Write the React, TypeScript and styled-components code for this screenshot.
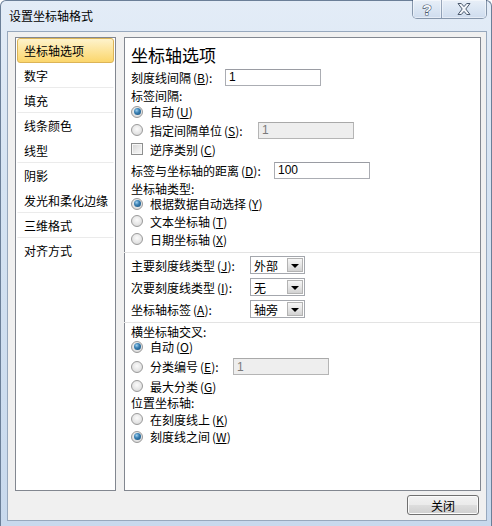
import React from "react";
import styled, { createGlobalStyle } from "styled-components";

const Global = createGlobalStyle`
  html, body { margin: 0; padding: 0; background: #ffffff; }
  body {
    font-family: "Noto Sans CJK SC", "Noto Sans", sans-serif;
    font-size: 12px;
    color: #000;
  }
  * { box-sizing: border-box; }
`;

const Window = styled.div`
  width: 492px;
  height: 526px;
  display: flex;
  flex-direction: column;
  background: linear-gradient(180deg, #e3ecf7 0%, #d5e3f2 35%, #c8d9ed 100%);
  border: 1px solid #6b7f98;
  border-bottom: none;
  border-radius: 6px 6px 0 0;
  padding: 0 4px 5px 6px;
`;

const TitleBar = styled.div`
  height: 30px;
  flex: none;
  display: flex;
  align-items: flex-start;
  justify-content: space-between;
`;

const TitleText = styled.div`
  margin-left: 2px;
  line-height: 30px;
  font-size: 12px;
  color: #000;
`;

const Caption = styled.div`
  display: flex;
  height: 19px;
  margin-top: -1px;
  border: 1px solid rgba(60, 82, 112, 0.55);
  border-top: none;
  border-radius: 0 0 5px 5px;
  overflow: hidden;
`;

const CapButton = styled.div<{ $w: number }>`
  width: ${(p) => p.$w}px;
  display: flex;
  align-items: center;
  justify-content: center;
  background: linear-gradient(180deg, #e8eff8 0%, #dbe6f3 50%, #cfdcee 100%);
  box-shadow: inset 0 0 0 1px rgba(255, 255, 255, 0.45);
  & + & {
    border-left: 1px solid rgba(60, 82, 112, 0.45);
  }
`;

const HelpGlyph = styled.span`
  font-family: "Liberation Sans", sans-serif;
  font-weight: bold;
  font-size: 15px;
  line-height: 15px;
  color: #f4f7fb;
  -webkit-text-stroke: 1.2px #4b5a6e;
  paint-order: stroke fill;
`;

const Client = styled.div`
  flex: 1;
  display: flex;
  flex-direction: column;
  background: #f0f0f0;
  border: 1px solid #97a8bd;
  padding: 5px 5px 5px 7px;
`;

const Body = styled.div`
  display: flex;
  gap: 8px;
  height: 454px;
`;

const NavList = styled.div`
  width: 101px;
  flex: none;
  background: #fff;
  border: 1px solid #828790;
  padding: 0 1px;
  display: flex;
  flex-direction: column;
`;

const NavItem = styled.div<{ $active?: boolean; $sep?: boolean }>`
  height: 25px;
  flex: none;
  display: flex;
  align-items: center;
  padding-left: 6px;
  font-size: 12px;
  color: #000;
  border: 1px solid ${(p) => (p.$active ? "#dcb457" : "transparent")};
  border-bottom-color: ${(p) =>
    p.$active ? "#dcb457" : p.$sep ? "#ebebeb" : "transparent"};
  border-radius: ${(p) => (p.$active ? "3px" : "0")};
  background: ${(p) =>
    p.$active
      ? "linear-gradient(180deg, #fef3cc 0%, #fde6a0 45%, #fbd66c 100%)"
      : "transparent"};
`;

const Panel = styled.div`
  flex: 1;
  background: #fff;
  border: 1px solid #828790;
  padding: 4px 6px;
  display: flex;
  flex-direction: column;
`;

const PanelTitle = styled.div`
  height: 24px;
  display: flex;
  align-items: center;
  font-size: 17px;
  color: #000;
`;

const Row = styled.div<{ $h: number }>`
  height: ${(p) => p.$h}px;
  flex: none;
  display: flex;
  align-items: center;
  white-space: nowrap;
`;

const Label = styled.span<{ $w?: number }>`
  display: inline-block;
  width: ${(p) => (p.$w ? `${p.$w}px` : "auto")};
  flex: none;
`;

const Opt = styled.span<{ $w?: number }>`
  display: inline-block;
  margin-left: 7px;
  width: ${(p) => (p.$w ? `${p.$w}px` : "auto")};
  flex: none;
`;

const Mn = styled.span`
  margin-left: 2px;
  u { text-underline-offset: 1px; }
`;

const TextBox = styled.div<{ $disabled?: boolean }>`
  width: 96px;
  height: 17px;
  flex: none;
  border: 1px solid ${(p) => (p.$disabled ? "#b5b5b5" : "#abadb3")};
  border-top-color: ${(p) => (p.$disabled ? "#a9a9a9" : "#9a9ca3")};
  background: ${(p) => (p.$disabled ? "#eeeeee" : "#fff")};
  color: ${(p) => (p.$disabled ? "#7a7a7a" : "#000")};
  padding-left: 3px;
  display: flex;
  align-items: center;
  font-family: "Liberation Sans", "Noto Sans CJK SC", sans-serif;
  font-size: 12px;
`;

const Radio = styled.span<{ $on?: boolean }>`
  width: 12px;
  height: 12px;
  flex: none;
  border-radius: 50%;
  border: 1px solid #9a9a9a;
  background: radial-gradient(circle at 50% 40%, #fbfbfb 0%, #e6e6e6 55%, #cfcfcf 100%);
  display: flex;
  align-items: center;
  justify-content: center;
  &::after {
    content: "";
    display: ${(p) => (p.$on ? "block" : "none")};
    width: 7px;
    height: 7px;
    border-radius: 50%;
    background: radial-gradient(circle at 38% 35%, #9fd0ef 0%, #3a80b3 40%, #104a76 100%);
  }
`;

const Check = styled.span`
  width: 12px;
  height: 12px;
  flex: none;
  border: 1px solid #8e8f8f;
  background: linear-gradient(135deg, #d3d3d3 0%, #ececec 60%, #f7f7f7 100%);
  box-shadow: inset 0 0 0 1px #f6f6f6;
`;

const Rule = styled.div<{ $top: number; $bottom: number }>`
  height: 1px;
  flex: none;
  background: #e3e3e3;
  margin: ${(p) => p.$top}px -6px ${(p) => p.$bottom}px -7px;
`;

const SelectGrid = styled.div`
  display: grid;
  grid-template-columns: 119px 55px;
  grid-auto-rows: 22px;
  align-items: center;
`;

const Select = styled.div`
  width: 55px;
  height: 18px;
  border: 1px solid #a4a7ad;
  background: #fff;
  display: flex;
  align-items: center;
  justify-content: space-between;
  padding: 0 1px 0 3px;
`;

const DropButton = styled.span`
  width: 16px;
  height: 14px;
  flex: none;
  border: 1px solid #b3b3b3;
  background: linear-gradient(180deg, #f6f6f6 0%, #e6e6e6 50%, #d2d2d2 100%);
  display: flex;
  align-items: center;
  justify-content: center;
  &::after {
    content: "";
    width: 0;
    height: 0;
    border-left: 4px solid transparent;
    border-right: 4px solid transparent;
    border-top: 4px solid #000;
    margin-top: 1px;
  }
`;

const Footer = styled.div`
  display: flex;
  justify-content: flex-end;
  margin-top: 4px;
  padding-right: 2px;
`;

const Button = styled.div`
  width: 72px;
  height: 20px;
  border: 1px solid #707070;
  border-radius: 3px;
  background: linear-gradient(180deg, #f2f2f2 0%, #ebebeb 48%, #dddddd 52%, #cfcfcf 100%);
  box-shadow: inset 0 0 0 1px #fbfbfb;
  display: flex;
  align-items: center;
  justify-content: center;
  font-size: 12px;
  color: #000;
`;

const Key = ({ k }: { k: string }) => (
  <Mn>
    (<u>{k}</u>)
  </Mn>
);

const navItems: { label: string; sep?: boolean; active?: boolean }[] = [
  { label: "坐标轴选项", active: true },
  { label: "数字", sep: true },
  { label: "填充", sep: true },
  { label: "线条颜色" },
  { label: "线型", sep: true },
  { label: "阴影" },
  { label: "发光和柔化边缘", sep: true },
  { label: "三维格式", sep: true },
  { label: "对齐方式" },
];

const CloseIcon = () => (
  <svg width="14" height="12" viewBox="0 0 14 12">
    <polygon
      points="1,0.5 4.3,0.5 7,3.6 9.7,0.5 13,0.5 8.8,6 13,11.5 9.7,11.5 7,8.4 4.3,11.5 1,11.5 5.2,6"
      fill="#f3f6fa"
      stroke="#4b5a6e"
      strokeWidth="1"
      strokeLinejoin="round"
    />
  </svg>
);

export default function App() {
  return (
    <>
      <Global />
      <Window>
        <TitleBar>
          <TitleText>设置坐标轴格式</TitleText>
          <Caption>
            <CapButton $w={28}>
              <HelpGlyph>?</HelpGlyph>
            </CapButton>
            <CapButton $w={45}>
              <CloseIcon />
            </CapButton>
          </Caption>
        </TitleBar>
        <Client>
          <Body>
            <NavList>
              {navItems.map((n) => (
                <NavItem key={n.label} $active={n.active} $sep={n.sep}>
                  {n.label}
                </NavItem>
              ))}
            </NavList>
            <Panel>
              <PanelTitle>坐标轴选项</PanelTitle>
              <Row $h={22}>
                <Label $w={94}>
                  刻度线间隔<Key k="B" />:
                </Label>
                <TextBox>1</TextBox>
              </Row>
              <Row $h={15}>标签间隔:</Row>
              <Row $h={17}>
                <Radio $on />
                <Opt>
                  自动<Key k="U" />
                </Opt>
              </Row>
              <Row $h={20}>
                <Radio />
                <Opt $w={108}>
                  指定间隔单位<Key k="S" />:
                </Opt>
                <TextBox $disabled>1</TextBox>
              </Row>
              <Row $h={18}>
                <Check />
                <Opt>
                  逆序类别<Key k="C" />
                </Opt>
              </Row>
              <Row $h={24}>
                <Label $w={143}>
                  标签与坐标轴的距离<Key k="D" />:
                </Label>
                <TextBox>100</TextBox>
              </Row>
              <Row $h={13}>坐标轴类型:</Row>
              <Row $h={17}>
                <Radio $on />
                <Opt>
                  根据数据自动选择<Key k="Y" />
                </Opt>
              </Row>
              <Row $h={18}>
                <Radio />
                <Opt>
                  文本坐标轴<Key k="T" />
                </Opt>
              </Row>
              <Row $h={18}>
                <Radio />
                <Opt>
                  日期坐标轴<Key k="X" />
                </Opt>
              </Row>
              <Rule $top={4} $bottom={1} />
              <SelectGrid>
                <Label>
                  主要刻度线类型<Key k="J" />:
                </Label>
                <Select>
                  外部
                  <DropButton />
                </Select>
                <Label>
                  次要刻度线类型<Key k="I" />:
                </Label>
                <Select>
                  无
                  <DropButton />
                </Select>
                <Label>
                  坐标轴标签<Key k="A" />:
                </Label>
                <Select>
                  轴旁
                  <DropButton />
                </Select>
              </SelectGrid>
              <Rule $top={2} $bottom={1} />
              <Row $h={14}>横坐标轴交叉:</Row>
              <Row $h={17}>
                <Radio $on />
                <Opt>
                  自动<Key k="O" />
                </Opt>
              </Row>
              <Row $h={23}>
                <Radio />
                <Opt $w={83}>
                  分类编号<Key k="E" />:
                </Opt>
                <TextBox $disabled>1</TextBox>
              </Row>
              <Row $h={16}>
                <Radio />
                <Opt>
                  最大分类<Key k="G" />
                </Opt>
              </Row>
              <Row $h={17}>位置坐标轴:</Row>
              <Row $h={16}>
                <Radio />
                <Opt>
                  在刻度线上<Key k="K" />
                </Opt>
              </Row>
              <Row $h={19}>
                <Radio $on />
                <Opt>
                  刻度线之间<Key k="W" />
                </Opt>
              </Row>
            </Panel>
          </Body>
          <Footer>
            <Button>关闭</Button>
          </Footer>
        </Client>
      </Window>
    </>
  );
}
